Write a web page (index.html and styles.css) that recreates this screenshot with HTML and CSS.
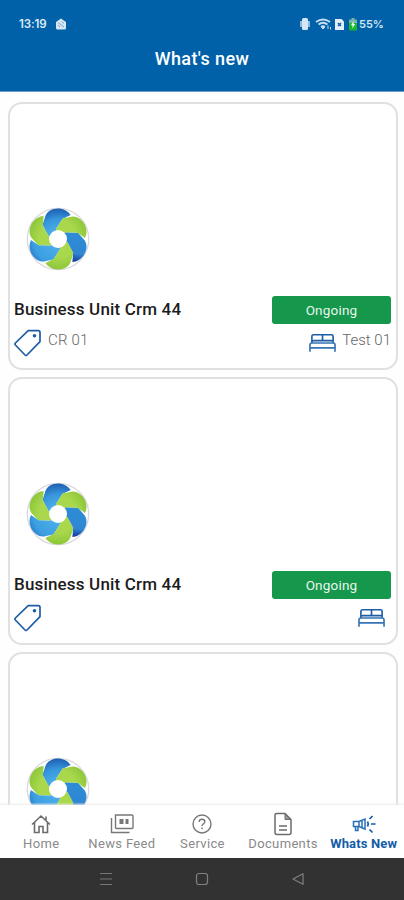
FILE: index.html
```
<!DOCTYPE html>
<html lang="en">
<head>
<meta charset="utf-8">
<title>What's new</title>
<link rel="stylesheet" href="styles.css">
</head>
<body>
<svg class="defs" width="0" height="0" aria-hidden="true">
  <defs>
    <radialGradient id="blue" gradientUnits="userSpaceOnUse" cx="0" cy="0" r="31"><stop offset="0.3" stop-color="#49abe8"/><stop offset="0.65" stop-color="#3796dc"/><stop offset="1" stop-color="#1c5cb0"/></radialGradient>
    <radialGradient id="sky" gradientUnits="userSpaceOnUse" cx="0" cy="0" r="31"><stop offset="0.3" stop-color="#49abe8"/><stop offset="0.8" stop-color="#3c9fe1"/><stop offset="1" stop-color="#2b80cc"/></radialGradient>
    <linearGradient id="navy" gradientUnits="userSpaceOnUse" x1="8" y1="-18" x2="28" y2="-2"><stop offset="0" stop-color="#2f8bd5"/><stop offset="0.65" stop-color="#2f86d2"/><stop offset="1" stop-color="#103392"/></linearGradient>
    <radialGradient id="green" gradientUnits="userSpaceOnUse" cx="0" cy="0" r="31"><stop offset="0.6" stop-color="#a9d84d"/><stop offset="1" stop-color="#8cc638"/></radialGradient>
    <path id="petal" d="M-2-6L-2-10L4.500-20.500L12-22C18-24 24-20 27-14C29-9 29-5 27-1L19.500-6.300L7.700-6.700L4-4Z"/>
    <symbol id="logo" viewBox="-32 -32 64 64">
      <circle r="30.7" fill="#fff" stroke="#d9d9df" stroke-width="1.3"/>
      <g>
        <use href="#petal" fill="url(#blue)" transform="rotate(300)"/>
        <use href="#petal" fill="url(#green)" transform="rotate(240)"/>
        <use href="#petal" fill="url(#sky)" transform="rotate(180)"/>
        <use href="#petal" fill="url(#green)" transform="rotate(120)"/>
        <use href="#petal" fill="url(#navy)" transform="rotate(60)"/>
        <use href="#petal" fill="url(#green)"/>
      </g>
      <circle r="9" fill="#fff"/>
    </symbol>
    <symbol id="tag" viewBox="0 0 28 28">
      <path d="M14.2 1.7H24.3Q26 1.7 26 3.4V12.6L13 26Q12 27 11 26L1.4 16Q.5 15 1.4 14Z" fill="none" stroke="#1d5da5" stroke-width="1.7" stroke-linejoin="round"/>
      <circle cx="20.5" cy="6.8" r="1.8" fill="#1d5da5"/>
    </symbol>
    <symbol id="bed" viewBox="0 0 28 20">
      <g fill="none" stroke="#1d5da5" stroke-width="1.7">
        <path d="M3 10V3.2Q3 1.5 4.7 1.5H23.3Q25 1.5 25 3.2V10M14 1.5V7M3 8.5Q3.2 7.5 5 7.5H12.5Q14 7.5 14 6Q14 7.5 15.500 7.500H23Q25 7.500 25 8.500"/>
        <path d="M1 19V12Q1 10 3 10H25Q27 10 27 12V19M1 15H27" stroke="#3474b4"/>
      </g>
    </symbol>
  </defs>
</svg>
<div class="phone">
  <header class="header">
    <div class="status">
      <span class="time">13:19</span>
      <svg class="app" width="12" height="12" viewBox="0 0 12 12"><path d="M1 4L6 .5L11 4V10Q11 11.500 9.500 11.500H2.500Q1 11.500 1 10Z" fill="#d5e6f5"/><path d="M3 4.500L9 9M6.500 3.500L9 5.500M3 7L5 9" stroke="#7caacf" stroke-width="1"/></svg>
      <span class="grow"></span>
      <svg class="vib" width="12" height="14" viewBox="0 0 12 14"><rect x="3" y="1" width="6" height="12" rx="1.500" fill="#d5e6f5"/><path d="M2 4V10M10 4V10" stroke="#8fb9dc" stroke-width="2"/></svg>
      <svg class="wifi" width="17" height="12" viewBox="0 0 17 12"><path d="M1 4Q8 -1 15 4M3.500 6.500Q8 3 12.500 6.500M6 8.800Q8 7.500 10 8.800" fill="none" stroke="#c6dcef" stroke-width="1.800"/><path d="M8 11L6.500 9.500H9.500ZM13 7.500V11M15.500 9V11.500" fill="#d5e6f5" stroke="#c6dcef"/></svg>
      <svg class="sim" width="11" height="13" viewBox="0 0 11 13"><path d="M1 1H7.500L10 3.500V12H1Z" fill="#e4eff9"/><path d="M4 5L7 8M7 5L4 8" stroke="#0b61a8" stroke-width="1.500"/></svg>
      <svg class="bat" width="8" height="13" viewBox="0 0 8 13"><path d="M2.500 0H5.500V1.500H7Q8 1.500 8 2.500V6H0V2.500Q0 1.500 1 1.500H2.500Z" fill="#75b6a8"/><path d="M0 5H8V11Q8 12.500 6.500 12.500H1.500Q0 12.500 0 11Z" fill="#19b82c"/><path d="M4.500 3L2 7.300H3.700L3.300 10.500L6.200 6H4.500Z" fill="#fff"/></svg>
      <span class="pct">55%</span>
    </div>
    <h1 class="title">What's new</h1>
  </header>
  <main class="list">
    <article class="card">
      <svg class="logo"><use href="#logo"/></svg>
      <div class="row"><h2 class="name">Business Unit Crm 44</h2><span class="badge">Ongoing</span></div>
      <div class="meta"><svg class="tag"><use href="#tag"/></svg><span class="code">CR 01</span><span class="grow"></span><svg class="bed"><use href="#bed"/></svg><span class="unit">Test 01</span></div>
    </article>
    <article class="card">
      <svg class="logo"><use href="#logo"/></svg>
      <div class="row"><h2 class="name">Business Unit Crm 44</h2><span class="badge">Ongoing</span></div>
      <div class="meta"><svg class="tag"><use href="#tag"/></svg><span class="grow"></span><svg class="bed"><use href="#bed"/></svg></div>
    </article>
    <article class="card">
      <svg class="logo"><use href="#logo"/></svg>
    </article>
  </main>
  <nav class="tabs">
    <a class="tab"><svg width="22" height="24" viewBox="0 0 22 24"><path d="M2 12.500L11 4L20 12.500M4.500 10.500V20.500H9V14.500H13V20.500H17.500V10.500M16 8V4.500" fill="none" stroke="#6c6c6c" stroke-width="1.600"/></svg><span>Home</span></a>
    <a class="tab"><svg width="24" height="24" viewBox="0 0 24 24"><path d="M5.500 3H22Q23 3 23 4V15.500Q23 16.500 22 16.500H6.500Q5.500 16.500 5.500 15.500ZM1.500 6V20.500H19.500" fill="none" stroke="#777" stroke-width="1.400"/><path d="M9.500 7H13.500V12H9.500ZM15.500 7H18.500V12H15.500Z" fill="#777"/></svg><span>News Feed</span></a>
    <a class="tab"><svg width="22" height="24" viewBox="0 0 22 24"><circle cx="11" cy="12" r="9" fill="none" stroke="#777" stroke-width="1.400"/><path d="M8.200 10Q8.200 7.300 11 7.300Q13.800 7.300 13.800 9.700C13.800 11.700 11 11.700 11 14" fill="none" stroke="#777" stroke-width="1.400"/><circle cx="11" cy="16.300" r=".9" fill="#777"/></svg><span>Service</span></a>
    <a class="tab"><svg width="20" height="24" viewBox="0 0 20 24"><path d="M3.500 1.500H12L18 7.500V20.500Q18 22.500 16 22.500H4Q2 22.500 2 20.500V3Q2 1.500 3.500 1.500ZM6 14H14M6 18H14" fill="none" stroke="#6c6c6c" stroke-width="1.500"/><path d="M12 2L17.500 7.500H12Z" fill="#999" stroke="#6c6c6c"/></svg><span>Documents</span></a>
    <a class="tab active"><svg width="26" height="24" viewBox="0 0 26 24"><path d="M2.500 9.500H8L14 7V17L8 14.500H2.500ZM4.500 14.500V18.500H7V14.500M8 9V15M11 8V16" fill="none" stroke="#2a6eb3" stroke-width="1.500"/><path d="M18.500 7L21.500 4M20 12H24.500M18.500 17.500L21.500 20.500M16.500 9.500Q18 12 16.500 14.500" fill="none" stroke="#135ca8" stroke-width="1.700"/></svg><span>Whats New</span></a>
  </nav>
  <footer class="system">
    <svg width="14" height="14" viewBox="0 0 14 14"><path d="M1 1.500H13M1 7H13M1 12.500H13" stroke="#767676" stroke-width="1.200"/></svg>
    <svg width="14" height="14" viewBox="0 0 14 14"><rect x="1.500" y="1.500" width="11" height="11" rx="2.500" fill="none" stroke="#808080" stroke-width="1.200"/></svg>
    <svg width="14" height="14" viewBox="0 0 14 14"><path d="M12 1.700V12.300L2 7Z" fill="none" stroke="#808080" stroke-width="1.200" stroke-linejoin="round"/></svg>
  </footer>
</div>
</body>
</html>
```
FILE: styles.css
```
* { box-sizing: border-box; }
body { margin: 0; font-family: Roboto, "Liberation Sans", sans-serif; background: #fff; }
svg { display: block; flex: none; }
.defs { position: absolute; }
.phone { width: 404px; height: 900px; display: flex; flex-direction: column; overflow: hidden; background: #fefefe; }
.grow { flex: 1; }
.header { flex: none; display: flex; flex-direction: column; height: 92px; background: #0061a8; color: #fff; border-bottom: 1px solid #69a0ca; }
.status { display: flex; align-items: center; height: 16px; margin-top: 16px; padding: 0 18px 0 19px; }
.time { width: 36px; font: 600 11.5px/16px Inter, sans-serif; letter-spacing: -0.1px; color: #deebf7; }
.vib { margin-right: 4px; }
.wifi { margin-right: 2px; }
.sim { margin-right: 4px; }
.bat { margin-right: 2px; }
.pct { width: 27px; font: 600 11px/16px Inter, sans-serif; color: #d5e6f5; white-space: nowrap; }
.title { margin: 15px 0 0; text-align: center; font-size: 18px; line-height: 24px; font-weight: 500; letter-spacing: 0.4px; }
.list { flex: 1; min-height: 0; overflow: hidden; padding: 10px 6px 0 8px; display: flex; flex-direction: column; gap: 7px; }
.card { flex: none; height: 268px; border: 2px solid #e0e0e1; border-radius: 14px; background: #fff; padding: 103px 5px 0 4px; }
.logo { width: 64px; height: 64px; margin-left: 12px; }
.row { display: flex; justify-content: space-between; align-items: center; margin-top: 25px; height: 28px; }
.name { margin: 0 0 3px; font-size: 17px; line-height: 24px; font-weight: 500; letter-spacing: 0.17px; color: #1c1c1c; }
.badge { width: 119px; height: 28px; border-radius: 3px; background: #15974c; color: #e8f6ed; font-size: 13.5px; line-height: 28px; letter-spacing: 0.2px; text-align: center; }
.meta { display: flex; margin-top: 5px; }
.tag { width: 28px; height: 28px; }
.code, .unit { font-size: 15px; line-height: 22px; color: #666; font-weight: 300; }
.code { margin-left: 6px; letter-spacing: 0.2px; }
.bed { width: 27px; height: 20px; margin: 4px 6px 0 0; }
.tabs { flex: none; height: 53px; display: flex; background: #fff; box-shadow: 0 -1px 2px #e9e9e9; padding: 7px 0 0 1px; }
.tab { width: 20%; display: flex; flex-direction: column; align-items: center; color: #8a8a8a; font-size: 13px; line-height: 16px; letter-spacing: 0.35px; white-space: nowrap; }
.active { color: #135ca8; font-weight: 700; letter-spacing: 0.15px; }
.system { flex: none; height: 42px; background: #323232; display: flex; justify-content: center; gap: 82px; align-items: center; }
```
